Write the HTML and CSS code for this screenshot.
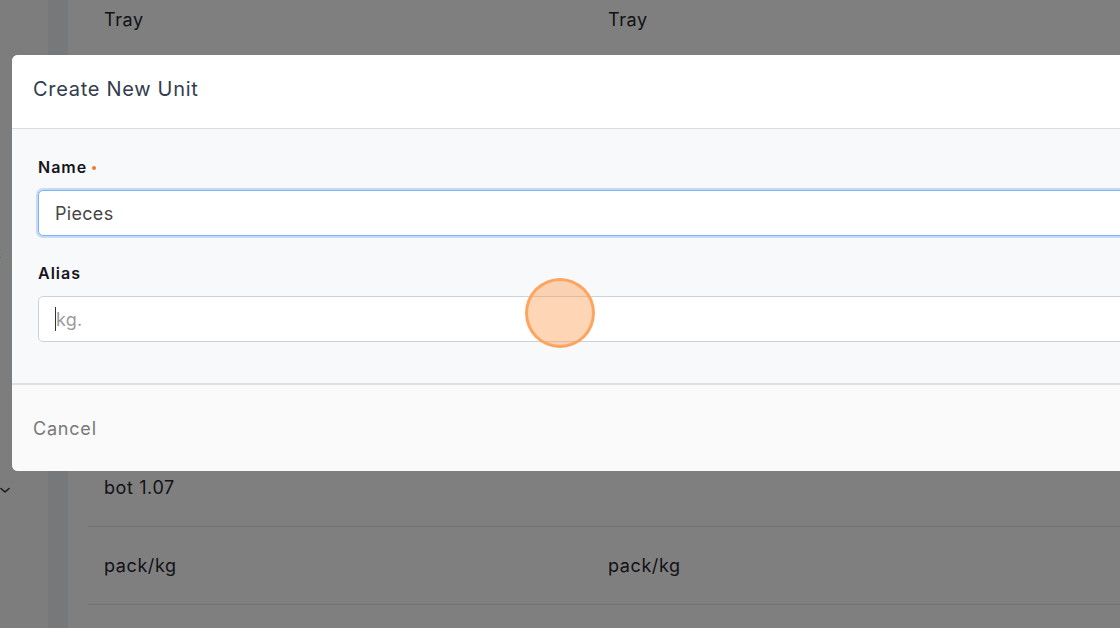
FILE: index.html
```html
<!DOCTYPE html>
<html>
<head>
<meta charset="utf-8">
<link rel="stylesheet" href="styles.css">
</head>
<body>
<div class="page">
  <aside class="sidebar">
    <div class="side-item side-text">Unit</div>
    <div class="side-item side-icon">
      <svg width="12" height="12" viewBox="0 0 12 12"><path d="M2 4.5 L6 8 L10 4.5" fill="none" stroke="#333" stroke-width="1.6" stroke-linecap="round" stroke-linejoin="round"/></svg>
    </div>
  </aside>
  <div class="strip"></div>
  <main class="main">
    <div class="table">
      <div class="row"><div class="cell">Tray</div><div class="cell">Tray</div></div>
      <div class="row"><div class="cell">Box</div><div class="cell">Box</div></div>
      <div class="row"><div class="cell">Bottle</div><div class="cell">Bottle</div></div>
      <div class="row"><div class="cell">Can</div><div class="cell">Can</div></div>
      <div class="row"><div class="cell">Pack</div><div class="cell">Pack</div></div>
      <div class="row"><div class="cell">Bag</div><div class="cell">Bag</div></div>
      <div class="row"><div class="cell">bot 1.07</div><div class="cell"></div></div>
      <div class="row"><div class="cell">pack/kg</div><div class="cell">pack/kg</div></div>
    </div>
  </main>
</div>

<div class="overlay"></div>

<div class="modal">
  <div class="modal-header">Create New Unit</div>
  <div class="modal-body">
    <div class="field">
      <label class="label">Name <span class="req"></span></label>
      <div class="input focused">Pieces</div>
    </div>
    <div class="field">
      <label class="label">Alias</label>
      <div class="input"><span class="caret"></span><span class="placeholder">kg.</span></div>
    </div>
  </div>
  <div class="modal-footer">
    <span class="cancel">Cancel</span>
  </div>
</div>

<div class="click-dot"></div>
</body>
</html>
```

FILE: styles.css
```css
* { box-sizing: border-box; }
html, body { margin: 0; padding: 0; }
body {
  width: 1120px;
  height: 628px;
  overflow: hidden;
  font-family: Inter, "Noto Sans", "Liberation Sans", sans-serif;
  background: #ffffff;
  color: #22222e;
  position: relative;
}

.page {
  display: flex;
  height: 628px;
}

.sidebar {
  width: 48px;
  flex: none;
  background: #fafafa;
  display: flex;
  flex-direction: column;
  padding-top: 240px;
  overflow: hidden;
}
.side-item {
  font-size: 16px;
  color: #444;
}
.side-text {
  margin-left: -30px;
  height: 24px;
  line-height: 24px;
}
.side-icon {
  margin-top: 216px;
  margin-left: -1px;
  height: 16px;
}

.strip {
  width: 20px;
  flex: none;
  background: #eef0f3;
}

.main {
  flex: 1;
  padding-left: 20px;
  overflow: hidden;
}
.table {
  margin-top: -19px;
}
.row {
  display: flex;
  height: 78px;
  align-items: center;
  border-bottom: 1px solid #e4e4e8;
}
.cell {
  width: 504px;
  padding-left: 16px;
  font-size: 18px;
  letter-spacing: 0.6px;
  color: #27272f;
}

.overlay {
  position: absolute;
  inset: 0;
  background: rgba(0, 0, 0, 0.5);
}

.modal {
  position: absolute;
  left: 12px;
  top: 55px;
  width: 1200px;
  height: 416px;
  border-radius: 6px;
  overflow: hidden;
  background: #fafafa;
  display: flex;
  flex-direction: column;
}
.modal-header {
  height: 74px;
  flex: none;
  background: #ffffff;
  border-bottom: 1px solid #d8dde1;
  padding-left: 21px;
  display: flex;
  align-items: center;
  font-size: 20px;
  letter-spacing: 0.7px;
  color: #333c4e;
  padding-bottom: 5px;
}
.modal-body {
  height: 256px;
  flex: none;
  background: #f8f9fb;
  border-bottom: 2px solid #dfe0e6;
  padding: 27px 0 0 26px;
  display: flex;
  flex-direction: column;
  gap: 26px;
}
.field {
  display: flex;
  flex-direction: column;
  gap: 12px;
}
.label {
  font-size: 16px;
  font-weight: 600;
  letter-spacing: 1px;
  color: #15151a;
  display: flex;
  align-items: center;
  gap: 5px;
  height: 22px;
}
.req {
  width: 4px;
  height: 4px;
  border-radius: 50%;
  background: #f27a24;
  margin-top: 1px;
}
.input {
  height: 46px;
  background: #ffffff;
  border: 1px solid #cdd2d9;
  border-radius: 5px;
  padding-left: 16px;
  display: flex;
  align-items: center;
  font-size: 18px;
  letter-spacing: 0.3px;
  color: #454545;
}
.input.focused {
  border-color: #80b2ee;
  box-shadow: 0 0 0 2px #c4dcfa;
}
.caret {
  width: 1px;
  height: 24px;
  background: #333;
}
.placeholder {
  color: #9b9b9b;
}

.modal-footer {
  flex: 1;
  background: #fafafa;
  padding-left: 21px;
  display: flex;
  align-items: center;
}
.cancel {
  font-size: 18px;
  letter-spacing: 0.8px;
  color: #787878;
}

.click-dot {
  position: absolute;
  left: 525px;
  top: 278px;
  width: 70px;
  height: 70px;
  border-radius: 50%;
  background: rgba(253, 150, 70, 0.4);
  border: 3px solid rgba(253, 160, 85, 0.9);
}
```
